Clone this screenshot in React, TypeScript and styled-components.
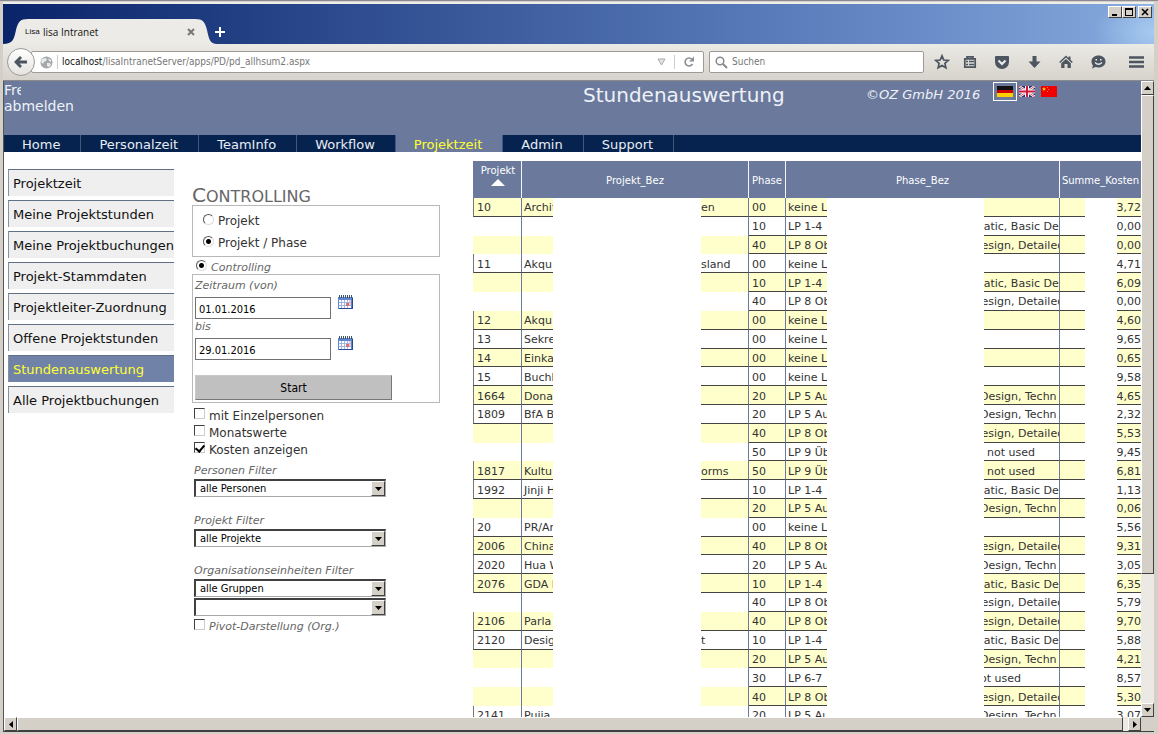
import React from "react";
import styled, { createGlobalStyle } from "styled-components";

const verdana = `Verdana, "DejaVu Sans", sans-serif`;
const tahoma = `Tahoma, "DejaVu Sans Condensed", "DejaVu Sans", sans-serif`;
const chromeFont = `"Segoe UI", "Open Sans", "Noto Sans", sans-serif`;

const slate = "#6b7a9c";
const navy = "#06234f";
const face = "#d4d0c8";

const GlobalStyle = createGlobalStyle`
  * { box-sizing: border-box; }
  body { margin: 0; background: ${face}; overflow: hidden; }
  button, input, select { font: inherit; color: inherit; margin: 0; }
`;

/* ---------- browser window ---------- */

const Window = styled.div`
  display: flex;
  flex-direction: column;
  height: 100vh;
  padding: 1px 4px 2px 3px;
  background: ${face};
  border-top: 1px solid #8c8a94;
  font-family: ${verdana};
`;

const TitleBar = styled.header`
  display: flex;
  align-items: flex-end;
  height: 42px;
  flex: none;
  position: relative;
  border-top: 2px solid #f0eeea;
  background:
    radial-gradient(ellipse 60px 40px at 100% 70%, #a6caf0, transparent),
    linear-gradient(90deg, #0a246a 0%, #3f5fa0 45%, #6a8cc8 80%, #86aadd 100%);
`;

const Tab = styled.div`
  position: relative;
  display: flex;
  align-items: center;
  width: 211px;
  height: 25px;
  padding: 0 19px 0 22px;
  font: 10px/16px ${chromeFont};
  color: #111;
`;

const TabShape = styled.svg`
  position: absolute;
  inset: 0;
`;

const TabIcon = styled.span`
  position: relative;
  width: 18px;
  font: 8px/16px "Liberation Sans", sans-serif;
`;

const TabTitle = styled.span`
  position: relative;
  flex: 1;
`;

const PlainButton = styled.button`
  position: relative;
  display: flex;
  align-items: center;
  justify-content: center;
  border: 0;
  padding: 0;
  background: none;
`;

const NewTab = styled(PlainButton)`
  width: 12px;
  height: 25px;
`;

const WindowButtons = styled.div`
  display: flex;
  align-self: flex-start;
  margin: 2px 2px 0 auto;
`;

const raised = `
  background: ${face};
  border: 1px solid;
  border-color: #fff #404040 #404040 #fff;
`;

const WindowButton = styled.button<{ $gap?: boolean }>`
  ${raised}
  display: flex;
  width: 14px;
  height: 12px;
  padding: 0;
  margin-left: ${(p) => (p.$gap ? 2 : 0)}px;
`;

const Toolbar = styled.div`
  display: flex;
  align-items: center;
  height: 37px;
  flex: none;
  padding: 0 8px 0 4px;
  background: linear-gradient(#eceae5, #d6d3cc);
  border-bottom: 1px solid #8a8a88;
  color: #4c5560;
`;

const BackButton = styled.button`
  position: relative;
  z-index: 1;
  display: flex;
  align-items: center;
  justify-content: center;
  width: 28px;
  height: 28px;
  flex: none;
  padding: 0;
  border: 1px solid #9b9b98;
  border-radius: 50%;
  background: linear-gradient(#fff, #e4e3e0);
`;

const Field = styled.div`
  display: flex;
  align-items: center;
  height: 22px;
  border: 1px solid #9c9b96;
  border-radius: 2px;
  background: #fff;
  font: 10px/16px ${tahoma};
  color: #777;
`;

const UrlField = styled(Field)`
  flex: 1;
  margin-left: -4px;
  padding: 0 8px;
`;

const SearchField = styled(Field)`
  width: 215px;
  margin: 0 4px 0 5px;
  padding: 0 5px;
  gap: 4px;
`;

const BareInput = styled.input`
  flex: 1;
  min-width: 0;
  padding: 0;
  border: 0;
  outline: 0;
  background: none;
  &::placeholder { color: #777; opacity: 1; }
`;

const Host = styled.span`
  color: #111;
`;

const Divider = styled.i<{ $gap: number }>`
  width: 1px;
  height: 14px;
  margin: 0 ${(p) => p.$gap}px;
  background: #ccc;
`;

const ToolIcons = styled.div`
  display: flex;
  gap: 12px;
`;

const ToolButton = styled(PlainButton)`
  width: 20px;
  height: 20px;
  color: inherit;
`;

const StarButton = styled(ToolButton)`
  margin: 0 -4px 0 4px;
`;

const MenuButton = styled(ToolButton)`
  margin-left: 18px;
`;

/* ---------- viewport and scroll bars ---------- */

const Viewport = styled.div`
  display: grid;
  grid-template-columns: minmax(0, 1fr) 13px;
  grid-template-rows: minmax(0, 1fr) 14px;
  flex: 1;
  min-height: 0;
  border-left: 1px solid #555;
  border-bottom: 1px solid #404040;
`;

const ScrollTrack = styled.div<{ $row?: boolean }>`
  display: flex;
  flex-direction: ${(p) => (p.$row ? "row" : "column")};
  background: #ece9e4;
`;

const ScrollButton = styled.button`
  ${raised}
  display: flex;
  align-items: center;
  justify-content: center;
  width: 13px;
  height: 14px;
  flex: none;
  padding: 0;
  color: #000;
`;

const Thumb = styled.div<{ $grow: number }>`
  ${raised}
  flex: ${(p) => p.$grow} 1 0;
`;

const Rest = styled.div<{ $grow: number }>`
  flex: ${(p) => p.$grow} 1 0;
`;

/* ---------- page ---------- */

const Page = styled.div`
  display: flex;
  flex-direction: column;
  overflow: hidden;
  background: #fff;
`;

const Banner = styled.div`
  display: flex;
  height: 54px;
  flex: none;
  color: #eef1f8;
  background: ${slate};
`;

const User = styled.div`
  flex: 1;
  padding-top: 1px;
  font-size: 14px;
  line-height: 16px;
`;

const UserName = styled.div`
  width: 17px;
  overflow: hidden;
`;

const TextLink = styled.a`
  color: inherit;
  text-decoration: none;
`;

const PageTitle = styled.h1`
  width: 283px;
  margin: 0;
  font-size: 20px;
  font-weight: 400;
  line-height: 28px;
`;

const Copyright = styled.div`
  width: 127px;
  font-size: 13px;
  font-style: italic;
  line-height: 28px;
`;

const Flags = styled.div`
  display: flex;
  align-items: flex-start;
  width: 148px;
  padding-top: 1px;
`;

const FlagButton = styled.button<{ $active?: boolean }>`
  display: flex;
  padding: 3px;
  border: 1px solid ${(p) => (p.$active ? "#fff" : "transparent")};
  background: none;
  & + & { margin-left: -2px; }
`;

const Nav = styled.nav`
  display: flex;
  height: 17px;
  flex: none;
  background: ${navy};
`;

const NavLink = styled.a<{ $active?: boolean }>`
  padding: 0 20px 0 18px;
  border-right: 1px solid #42587c;
  font-size: 13px;
  line-height: 19px;
  text-decoration: none;
  color: ${(p) => (p.$active ? "#ffff33" : "#e8ecf4")};
  background: ${(p) => (p.$active ? slate : "none")};
`;

const Columns = styled.div`
  display: flex;
  align-items: flex-start;
  padding-left: 4px;
`;

const SideMenu = styled.nav`
  display: flex;
  flex-direction: column;
  gap: 4px;
  width: 166px;
  flex: none;
  padding-top: 17px;
`;

const SideLink = styled.a<{ $active?: boolean }>`
  height: 27px;
  padding-left: 4px;
  border-top: 1px solid #5f6f86;
  border-left: 1px solid #8391a3;
  font-size: 13px;
  line-height: 27px;
  white-space: nowrap;
  text-decoration: none;
  color: ${(p) => (p.$active ? "#ffff33" : "#111")};
  background: ${(p) => (p.$active ? "#7182a8" : "#efefef")};
`;

const Controls = styled.form`
  width: 248px;
  flex: none;
  margin: 33px 33px 0 18px;
  color: #333;
  font-size: 12px;
`;

const Heading = styled.h2`
  height: 20px;
  margin: 0;
  font-size: 16px;
  font-weight: 400;
  text-transform: uppercase;
  line-height: 20px;
  color: #666;
  &::first-letter { font-size: 20px; }
`;

const Panel = styled.div`
  border: 1px solid #b8b8b8;
`;

const ChoicePanel = styled(Panel)`
  padding: 4px 10px 2px;
`;

const RangePanel = styled(Panel)`
  padding: 3px 2px 2px;
`;

const ModeRow = styled.div`
  padding: 4px 4px 1px;
`;

const Choice = styled.label<{ $h: number; $italic?: boolean }>`
  display: flex;
  align-items: center;
  gap: 4px;
  height: ${(p) => p.$h}px;
  ${(p) => p.$italic && "font-size: 11px; font-style: italic; color: #666;"}
`;

const Radio = styled.input.attrs({ type: "radio" })`
  appearance: none;
  width: 11px;
  height: 11px;
  margin-bottom: 4px;
  border: 1px solid;
  border-color: #555 #ddd #ddd #555;
  border-radius: 50%;
  &:checked { background: radial-gradient(circle, #000 2px, transparent 3px); }
`;

const Check = styled.input.attrs({ type: "checkbox" })`
  appearance: none;
  display: flex;
  align-items: flex-start;
  justify-content: center;
  width: 11px;
  height: 11px;
  margin-bottom: 4px;
  border: 1px solid;
  border-color: #404040 #ccc #ccc #404040;
  background: #fff;
  &:checked::after {
    content: "";
    width: 4px;
    height: 7px;
    border: solid #000;
    border-width: 0 2px 2px 0;
    transform: rotate(40deg);
  }
`;

const Caption = styled.label`
  display: block;
  font-size: 11px;
  font-style: italic;
  line-height: 16px;
  color: #666;
`;

const DateRow = styled.div`
  display: flex;
  gap: 7px;
  margin: 3px 0 0;
`;

const DateInput = styled.input`
  width: 136px;
  height: 22px;
  padding: 2px 3px 0;
  border: 1px solid #707070;
  background: #fff;
  font: 11px/16px ${tahoma};
  color: #000;
`;

const CalendarButton = styled(PlainButton)`
  align-self: flex-start;
  width: 15px;
  height: 14px;
  margin-top: -2px;
`;

const StartButton = styled.button`
  display: block;
  width: 197px;
  height: 25px;
  margin-top: 15px;
  padding: 0;
  border: 1px solid;
  border-color: #c8c8c8 #777 #777 #c8c8c8;
  background: #c0c0c0;
  font: 12px/16px ${tahoma};
  color: #000;
`;

const Options = styled.div`
  padding: 4px 2px 5px;
`;

const Filter = styled.div`
  padding: 0 2px;
  margin-bottom: 16px;
`;

const SelectBox = styled.span`
  position: relative;
  display: block;
  width: 192px;
  margin-bottom: 1px;
`;

const Select = styled.select`
  appearance: none;
  display: block;
  width: 192px;
  height: 18px;
  padding: 0 18px 0 4px;
  border: 1px solid;
  border-width: 2px 1px 1px 2px;
  border-color: #404040 #aaa #aaa #404040;
  border-radius: 0;
  background: #fff;
  font: 11px/15px ${tahoma};
  color: #000;
`;

const SelectArrow = styled.span`
  ${raised}
  position: absolute;
  top: 2px;
  right: 1px;
  display: flex;
  align-items: center;
  justify-content: center;
  width: 14px;
  height: 15px;
  color: #000;
  pointer-events: none;
`;

/* ---------- result table ---------- */

const Report = styled.div`
  position: relative;
  flex: 1 0 668px;
  margin-top: 9px;
`;

const Table = styled.table`
  width: 100%;
  height: 564px;
  table-layout: fixed;
  border-collapse: separate;
  border-spacing: 0;
  font-size: 11px;
  color: #333;
`;

const Th = styled.th`
  height: 37px;
  padding: 2px 0 0;
  border-right: 1px solid #f4f6fa;
  background: ${slate};
  color: #fff;
  font-size: 10px;
  font-weight: 400;
  line-height: 14px;
  &:last-child { border-right: 0; }
`;

const Row = styled.tr`
  &:nth-child(odd) { background: #ffffcc; }
`;

const Td = styled.td<{ $open?: boolean; $start?: boolean; $num?: boolean; $text?: boolean }>`
  padding: 3px 0 0 ${(p) => (p.$num ? 0 : p.$text ? 2 : 3)}px;
  overflow: hidden;
  white-space: pre;
  line-height: 14px;
  text-align: ${(p) => (p.$num ? "right" : "left")};
  border-right: ${(p) => (p.$num ? "0" : `1px solid ${slate}`)};
  border-left: ${(p) => (p.$start ? "1px solid #777" : "0")};
  border-bottom: ${(p) => (p.$open ? "0" : "1px solid #444")};
`;

const Split = styled.span<{ $left: number }>`
  display: grid;
  grid-template-columns: ${(p) => p.$left}px auto;
`;

const Blank = styled.div<{ $x: number; $w: number }>`
  position: absolute;
  top: 37px;
  bottom: 0;
  left: ${(p) => p.$x}px;
  width: ${(p) => p.$w}px;
  background: #fff;
`;

const SortButton = styled(PlainButton)`
  flex-direction: column;
  width: 100%;
  gap: 2px;
  padding: 0 0 11px 2px;
  line-height: 13px;
  color: #fff;
`;

type Entry = [string, string, string, string, string];

const NONE = "keine L";
const P14 = "LP 1-4";
const P5 = "LP 5 Au";
const P8 = "LP 8 Obj";
const P9 = "LP 9 Üb";

const tails: Record<string, string> = {
  [NONE]: "",
  [P14]: "matic, Basic De",
  [P5]: "  Design, Techn",
  [P8]: "Design, Detailed",
  [P9]: "    not used",
  "LP 6-7": "not used",
};

const entries: Entry[] = [
  ["10", "Archit|en", "00", NONE, "3,72"],
  ["", "", "10", P14, "0,00"],
  ["", "", "40", P8, "0,00"],
  ["11", "Akqu|sland", "00", NONE, "4,71"],
  ["", "", "10", P14, "6,09"],
  ["", "", "40", P8, "0,00"],
  ["12", "Akqu|", "00", NONE, "4,60"],
  ["13", "Sekre|", "00", NONE, "9,65"],
  ["14", "Einka|", "00", NONE, "0,65"],
  ["15", "Buchh|", "00", NONE, "9,58"],
  ["1664", "Dona|", "20", P5, "4,65"],
  ["1809", "BfA B|", "20", P5, "2,32"],
  ["", "", "40", P8, "5,53"],
  ["", "", "50", P9, "9,45"],
  ["1817", "Kultu|orms", "50", P9, "6,81"],
  ["1992", "Jinji H|", "10", P14, "1,13"],
  ["", "", "20", P5, "0,06"],
  ["20", "PR/An|", "00", NONE, "5,56"],
  ["2006", "China|", "40", P8, "9,31"],
  ["2020", "Hua W|", "20", P5, "3,05"],
  ["2076", "GDA B|", "10", P14, "6,35"],
  ["", "", "40", P8, "5,79"],
  ["2106", "Parla|", "40", P8, "9,70"],
  ["2120", "Desig|t", "10", P14, "5,88"],
  ["", "", "20", P5, "4,21"],
  ["", "", "30", "LP 6-7", "8,57"],
  ["", "", "40", P8, "5,30"],
  ["2141", "Pujia|", "20", P5, "3,07"],
];

const Arrow = ({ d, w = 7, h = 4 }: { d: string; w?: number; h?: number }) => (
  <svg width={w} height={h} viewBox={`0 0 ${w} ${h}`} aria-hidden="true">
    <path d={d} fill="currentColor" />
  </svg>
);
const DOWN = "M0 0h7L3.500 4z";

const Calendar = () => (
  <svg width="15" height="14" viewBox="0 0 15 14" aria-hidden="true">
    <path d="M0 2h15v12H0z" fill="#5f86d2" />
    <path d="M1 5h12v8H1z" fill="#fff" />
    <path d="M1.500 0v3M3.500 0v3M5.500 0v3M7.500 0v3M9.500 0v3M11.500 0v3M13.500 0v3" stroke="#456" />
    <path d="M3.500 5v8M6.500 5v8M9.500 5v8M1 7.500h12M1 10.500h12" stroke="#9db6e4" />
    <path d="M8 8h3v3H8z" fill="#dc7070" />
    <path d="M11 5h2v5h-2z" fill="#e6b3bb" opacity=".7" />
    <path d="M14.500 3v10.500H1" stroke="#27479a" fill="none" />
  </svg>
);

const Dropdown = ({ id, label, value }: { id: string; label?: string; value: string }) => (
  <SelectBox>
    <Select id={id} aria-label={label}>
      <option>{value}</option>
    </Select>
    <SelectArrow>
      <Arrow d={DOWN} />
    </SelectArrow>
  </SelectBox>
);

const navItems = ["Home", "Personalzeit", "TeamInfo", "Workflow", "Projektzeit", "Admin", "Support"];
const sideItems = [
  "Projektzeit",
  "Meine Projektstunden",
  "Meine Projektbuchungen",
  "Projekt-Stammdaten",
  "Projektleiter-Zuordnung",
  "Offene Projektstunden",
  "Stundenauswertung",
  "Alle Projektbuchungen",
];

const BrowserChrome = () => (
  <>
    <TitleBar>
      <Tab>
        <TabShape width="214" height="25" viewBox="0 0 214 25" aria-hidden="true">
          <path d="M0 25C10 25 11 20 13 11 15 3 17 0 25 0H192C200 0 202 3 204 11 206 20 207 25 214 25z" fill="#edebe7" />
        </TabShape>
        <TabIcon>Lisa</TabIcon>
        <TabTitle>lisa Intranet</TabTitle>
        <PlainButton aria-label="Tab schließen">
          <svg width="8" height="8" viewBox="0 0 8 8">
            <path d="M1 1l6 6M7 1L1 7" stroke="#777" strokeWidth="2" />
          </svg>
        </PlainButton>
      </Tab>
      <NewTab aria-label="Neuer Tab">
        <svg width="10" height="10" viewBox="0 0 10 10">
          <path d="M5 0v10M0 5h10" stroke="#fff" strokeWidth="2" />
        </svg>
      </NewTab>
      <WindowButtons>
        <WindowButton aria-label="Minimieren">
          <svg width="12" height="10" viewBox="0 0 12 10"><path d="M3 7h5v2H3z" /></svg>
        </WindowButton>
        <WindowButton aria-label="Maximieren">
          <svg width="12" height="10" viewBox="0 0 12 10"><path d="M2 1h8v8H2zM3 3v5h6V3z" fillRule="evenodd" /></svg>
        </WindowButton>
        <WindowButton aria-label="Schließen" $gap>
          <svg width="12" height="10" viewBox="0 0 12 10"><path d="M3 2l6 6M9 2L3 8" stroke="#000" strokeWidth="1.600" /></svg>
        </WindowButton>
      </WindowButtons>
    </TitleBar>
    <Toolbar>
      <BackButton aria-label="Zurück">
        <svg width="14" height="14" viewBox="0 0 14 14">
          <path d="M0 7l6-6 2 2-2.500 2.500H13v3H5.500L8 11l-2 2z" fill="#4c5560" />
        </svg>
      </BackButton>
      <UrlField>
        <svg width="13" height="13" viewBox="0 0 13 13" aria-hidden="true">
          <circle cx="6.500" cy="6.500" r="6" fill="#a4a8ab" />
          <path d="M2 3l3-1 2 1-1 2-2 1-1 2-2-2zM8 2l3 2 0 2-2-1zM7 7l3 0 1 2-2 2-2-1z" fill="#e8eaeb" />
        </svg>
        <Divider $gap={4} />
        <Host>localhost</Host>
        <BareInput aria-label="Adresse" defaultValue="/lisaIntranetServer/apps/PD/pd_allhsum2.aspx" />
        <svg width="9" height="8" viewBox="0 0 9 8" aria-hidden="true">
          <path d="M1 1h7L4.500 7z" fill="#e4e4e4" stroke="#aaa" />
        </svg>
        <Divider $gap={8} />
        <PlainButton aria-label="Neu laden">
          <svg width="12" height="12" viewBox="0 0 12 12">
            <path d="M9.500 8A4 4 0 1 1 9 3.200" fill="none" stroke="#8c9197" strokeWidth="1.600" />
            <path d="M11 0.500V5.500H6z" fill="#8c9197" />
          </svg>
        </PlainButton>
      </UrlField>
      <SearchField>
        <svg width="13" height="13" viewBox="0 0 13 13" aria-hidden="true">
          <circle cx="5" cy="5" r="3.800" fill="none" stroke="#888" strokeWidth="1.500" />
          <path d="M8 8l4 4" stroke="#888" strokeWidth="2" />
        </svg>
        <BareInput aria-label="Suchen" placeholder="Suchen" />
      </SearchField>
      <ToolIcons>
        <StarButton aria-label="Lesezeichen">
          <svg width="16" height="16" viewBox="0 0 16 16">
            <path d="M8 1.800l1.800 4.200 4.500.4-3.400 3 1 4.400L8 11.500l-3.900 2.300 1-4.400-3.400-3 4.500-.4z" fill="none" stroke="currentColor" strokeWidth="1.700" />
          </svg>
        </StarButton>
        <ToolButton aria-label="Lesezeichenliste">
          <svg width="14" height="14" viewBox="0 0 14 14">
            <path d="M1.800 3.800h10.400v8.400H1.800z" fill="none" stroke="currentColor" strokeWidth="1.700" />
            <path d="M4 4V1.800h6V4" fill="none" stroke="currentColor" strokeWidth="1.700" />
            <path d="M3 6.500h2M6 6.500h5M3 9.500h2M6 9.500h5" stroke="currentColor" strokeWidth="1.400" />
          </svg>
        </ToolButton>
        <ToolButton aria-label="Pocket">
          <svg width="14" height="13" viewBox="0 0 14 13">
            <path d="M1 0h12q1 0 1 1v5a7 7 0 0 1-14 0V1q0-1 1-1z" fill="currentColor" />
            <path d="M3.500 4.500L7 8l3.500-3.500" fill="none" stroke="#eee" strokeWidth="2" />
          </svg>
        </ToolButton>
        <ToolButton aria-label="Downloads">
          <svg width="13" height="14" viewBox="0 0 13 14"><path d="M4.500 1h4v5.500h4L6.500 13 .5 6.500h4z" fill="currentColor" /></svg>
        </ToolButton>
        <ToolButton aria-label="Startseite">
          <svg width="14" height="14" viewBox="0 0 14 14">
            <path d="M7 .5L.2 7l1 1L7 2.600 12.800 8l1-1-2.300-2.200V1.500h-2v1.400z" fill="currentColor" />
            <path d="M2.200 8.300L7 3.900l4.800 4.400V13H8.500V9h-3v4H2.200z" fill="currentColor" />
          </svg>
        </ToolButton>
        <ToolButton aria-label="Chat">
          <svg width="15" height="14" viewBox="0 0 15 14">
            <path d="M7.500.5c4 0 7 2.500 7 6s-3 6-7 6c-1 0-2-.2-3-.5L1 13.500l1-3C1 9.500.5 8 .5 6.500c0-3.500 3-6 7-6z" fill="currentColor" />
            <path d="M4 7.500q3.500 3.500 7 0" fill="none" stroke="#eee" strokeWidth="1.200" />
            <path d="M4.500 4h1.500v1.500H4.500zM9 4h1.500v1.500H9z" fill="#eee" />
          </svg>
        </ToolButton>
      </ToolIcons>
      <MenuButton aria-label="Menü">
        <svg width="15" height="12" viewBox="0 0 15 12">
          <path d="M0 1.500h15M0 6h15M0 10.500h15" stroke="currentColor" strokeWidth="2.600" />
        </svg>
      </MenuButton>
    </Toolbar>
  </>
);

const FlagRow = () => (
  <Flags>
    <FlagButton $active aria-label="Deutsch">
      <svg width="16" height="11" viewBox="0 0 16 11">
        <path d="M0 0h16v4H0z" fill="#111" />
        <path d="M0 4h16v4H0z" fill="#d00000" />
        <path d="M0 7h16v4H0z" fill="#ffce00" />
      </svg>
    </FlagButton>
    <FlagButton aria-label="English">
      <svg width="16" height="11" viewBox="0 0 16 11">
        <path d="M0 0h16v11H0z" fill="#1b2f78" />
        <path d="M0 0l16 11M16 0L0 11" stroke="#fff" strokeWidth="2.400" />
        <path d="M0 0l16 11M16 0L0 11" stroke="#d22" strokeWidth="0.800" />
        <path d="M8 0v11M0 5.500h16" stroke="#fff" strokeWidth="4" />
        <path d="M8 0v11M0 5.500h16" stroke="#d2143a" strokeWidth="2" />
      </svg>
    </FlagButton>
    <FlagButton aria-label="中文">
      <svg width="16" height="11" viewBox="0 0 16 11">
        <path d="M0 0h16v11H0z" fill="#f00000" />
        <path d="M3 1l.6 1.400 1.400.1-1.100.9.4 1.400L3 4l-1.300.8.4-1.400L1 2.500l1.400-.1z" fill="#fd0" />
        <path d="M6 1h1v1H6zM7 3h1v1H7zM6 5h1v1H6z" fill="#e90" />
      </svg>
    </FlagButton>
  </Flags>
);

const FilterForm = () => (
  <Controls onSubmit={(e) => e.preventDefault()}>
    <Heading>Controlling</Heading>
    <ChoicePanel>
      <Choice $h={22}>
        <Radio name="level" />
        Projekt
      </Choice>
      <Choice $h={22}>
        <Radio name="level" defaultChecked />
        Projekt / Phase
      </Choice>
    </ChoicePanel>
    <ModeRow>
      <Choice $h={12} $italic>
        <Radio name="mode" defaultChecked />
        Controlling
      </Choice>
    </ModeRow>
    <RangePanel>
      <Caption htmlFor="von">Zeitraum (von)</Caption>
      <DateRow>
        <DateInput id="von" defaultValue="01.01.2016" />
        <CalendarButton type="button" aria-label="Kalender von"><Calendar /></CalendarButton>
      </DateRow>
      <Caption htmlFor="bis">bis</Caption>
      <DateRow>
        <DateInput id="bis" defaultValue="29.01.2016" />
        <CalendarButton type="button" aria-label="Kalender bis"><Calendar /></CalendarButton>
      </DateRow>
      <StartButton>Start</StartButton>
    </RangePanel>
    <Options>
      <Choice $h={17}>
        <Check />
        mit Einzelpersonen
      </Choice>
      <Choice $h={17}>
        <Check />
        Monatswerte
      </Choice>
      <Choice $h={17}>
        <Check defaultChecked />
        Kosten anzeigen
      </Choice>
    </Options>
    <Filter>
      <Caption htmlFor="personen">Personen Filter</Caption>
      <Dropdown id="personen" value="alle Personen" />
    </Filter>
    <Filter>
      <Caption htmlFor="projekt">Projekt Filter</Caption>
      <Dropdown id="projekt" value="alle Projekte" />
    </Filter>
    <Filter>
      <Caption htmlFor="gruppe">Organisationseinheiten Filter</Caption>
      <Dropdown id="gruppe" value="alle Gruppen" />
      <Dropdown id="einheit" label="Organisationseinheit" value="" />
      <Choice $h={18} $italic>
        <Check />
        Pivot-Darstellung (Org.)
      </Choice>
    </Filter>
  </Controls>
);

const ResultTable = () => (
  <Report>
    <Table>
      <colgroup>
        <col width="49" />
        <col width="227" />
        <col width="37" />
        <col width="274" />
        <col />
      </colgroup>
      <thead>
        <tr>
          <Th>
            <SortButton>
              Projekt
              <Arrow d="M0 7L7 0l7 7z" w={14} h={7} />
            </SortButton>
          </Th>
          <Th>Projekt_Bez</Th>
          <Th>Phase</Th>
          <Th>Phase_Bez</Th>
          <Th>Summe_Kosten</Th>
        </tr>
      </thead>
      <tbody>
        {entries.map(([no, name, phase, phaseName, sum], i) => {
          const [head, tail] = name.split("|");
          return (
            <Row key={i}>
              <Td $open={!no} $start={!!no}>{no}</Td>
              <Td $open={!no} $text>
                <Split $left={177}>
                  <span>{head}</span>
                  <span>{tail}</span>
                </Split>
              </Td>
              <Td>{phase}</Td>
              <Td $text>
                <Split $left={185}>
                  <span>{phaseName}</span>
                  <span>{tails[phaseName]}</span>
                </Split>
              </Td>
              <Td $num>{sum}</Td>
            </Row>
          );
        })}
      </tbody>
    </Table>
    <Blank $x={80} $w={148} />
    <Blank $x={354} $w={157} />
    <Blank $x={612} $w={32} />
  </Report>
);

export default function App() {
  return (
    <Window>
      <GlobalStyle />
      <BrowserChrome />
      <Viewport>
        <Page>
          <Banner>
            <User>
              <UserName>Frei</UserName>
              <TextLink href="#abmelden">abmelden</TextLink>
            </User>
            <PageTitle>Stundenauswertung</PageTitle>
            <Copyright>©OZ GmbH 2016</Copyright>
            <FlagRow />
          </Banner>
          <Nav>
            {navItems.map((item) => (
              <NavLink key={item} href="#" $active={item === "Projektzeit"}>{item}</NavLink>
            ))}
          </Nav>
          <Columns>
            <SideMenu>
              {sideItems.map((item) => (
                <SideLink key={item} href="#" $active={item === "Stundenauswertung"}>{item}</SideLink>
              ))}
            </SideMenu>
            <FilterForm />
            <ResultTable />
          </Columns>
        </Page>
        <ScrollTrack>
          <ScrollButton aria-label="Nach oben"><Arrow d="M0 4h7L3.500 0z" /></ScrollButton>
          <Thumb $grow={478} />
          <Rest $grow={129} />
          <ScrollButton aria-label="Nach unten"><Arrow d={DOWN} /></ScrollButton>
        </ScrollTrack>
        <ScrollTrack $row>
          <ScrollButton aria-label="Nach links"><Arrow d="M4 0v7L0 3.500z" w={4} h={7} /></ScrollButton>
          <Thumb $grow={1105} />
          <Rest $grow={5} />
          <ScrollButton aria-label="Nach rechts"><Arrow d="M0 0v7l4-3.500z" w={4} h={7} /></ScrollButton>
        </ScrollTrack>
      </Viewport>
    </Window>
  );
}
